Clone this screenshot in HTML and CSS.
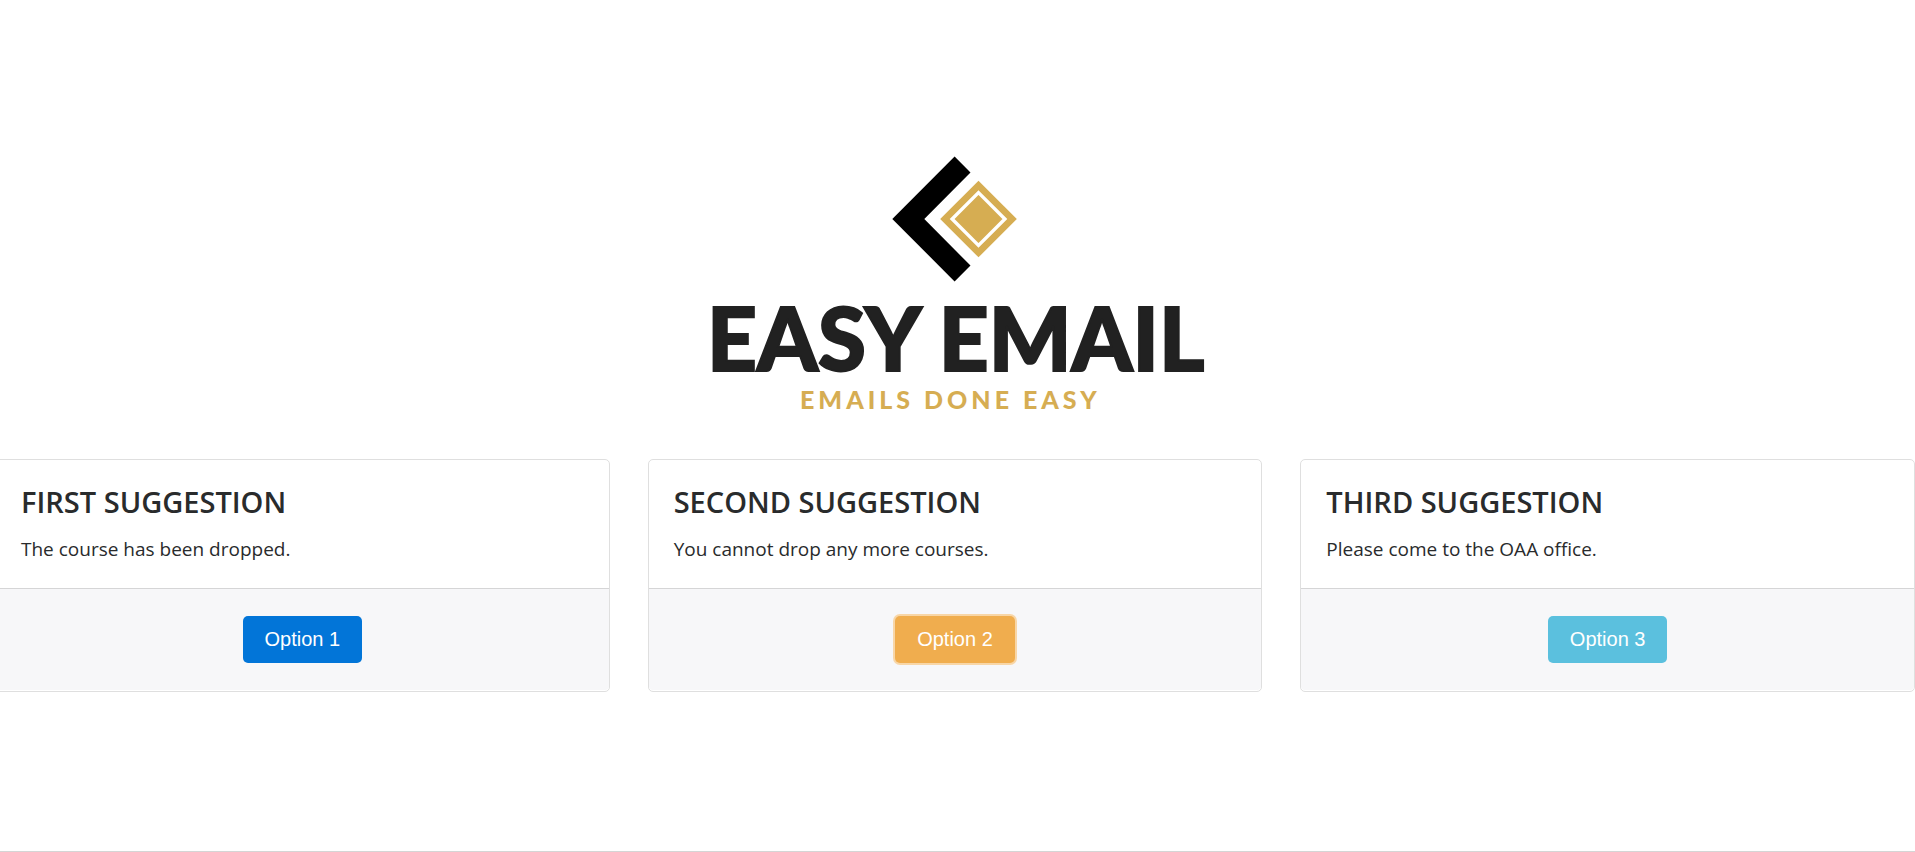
FILE: index.html
```html
<!DOCTYPE html>
<html lang="en">
<head>
  <meta charset="utf-8">
  <meta name="viewport" content="width=device-width, initial-scale=1">
  <title>Easy Email</title>
  <link rel="stylesheet" href="styles.css">
</head>
<body>
  <main class="page">
    <header class="brand">
      <svg class="logo" viewBox="0 0 535 280" role="img" aria-label="Easy Email, emails done easy">
        <path fill="#000" d="M202.3 79 264.6 16.6 280.5 32.4 234.3 79 280.5 125.6 264.6 141.4Z"/>
        <path fill="#d6ad52" d="M288.5 40.7 326.8 79 288.5 117.3 250.2 79Z"/>
        <path fill="none" stroke="#fff" stroke-width="3.4" d="M288.5 52.6 314.9 79 288.5 105.4 262.1 79Z"/>
        <text class="wordmark" x="17" y="231">EASY EMAIL</text>
        <text class="tagline" x="110" y="269">EMAILS DONE EASY</text>
      </svg>
    </header>
    <section class="deck">
      <article class="card">
        <div class="card-body">
          <h2 class="card-title">FIRST SUGGESTION</h2>
          <p class="card-text">The course has been dropped.</p>
        </div>
        <div class="card-footer"><button type="button" class="btn btn-primary">Option 1</button></div>
      </article>
      <article class="card">
        <div class="card-body">
          <h2 class="card-title">SECOND SUGGESTION</h2>
          <p class="card-text">You cannot drop any more courses.</p>
        </div>
        <div class="card-footer"><button type="button" class="btn btn-warning">Option 2</button></div>
      </article>
      <article class="card">
        <div class="card-body">
          <h2 class="card-title">THIRD SUGGESTION</h2>
          <p class="card-text">Please come to the OAA office.</p>
        </div>
        <div class="card-footer"><button type="button" class="btn btn-info">Option 3</button></div>
      </article>
    </section>
  </main>
</body>
</html>
```
FILE: styles.css
```css
* {
  box-sizing: border-box;
}

body {
  margin: 0;
  overflow-x: hidden;
  background: #fff;
  color: #292b2c;
  font-family: "Segoe UI", "Open Sans", "Noto Sans", sans-serif;
  font-size: 19px;
  line-height: 30px;
}

.page {
  display: flex;
  flex-direction: column;
  min-height: 100vh;
  padding-top: 140px;
  border-bottom: 1px solid #d5d5d5;
}

.brand {
  display: flex;
  justify-content: center;
  margin-bottom: 39px;
}

.logo {
  display: block;
  width: 535px;
  max-width: 100%;
}

.wordmark {
  fill: #212121;
  stroke: #212121;
  stroke-width: 2px;
  font-family: Lato, sans-serif;
  font-size: 87px;
  font-weight: 900;
}

.tagline {
  fill: #d6ad52;
  font-family: Lato, sans-serif;
  font-size: 25px;
  font-weight: 900;
  letter-spacing: 4px;
}

.deck {
  display: grid;
  grid-template-columns: repeat(3, 1fr);
  gap: 38px;
  margin-left: -5px;
}

.card {
  display: flex;
  flex-direction: column;
  padding-bottom: 1px;
  border: 1px solid #dfdfdf;
  border-radius: 5px;
  background: #fff;
}

.card-body {
  flex: 1;
  padding: 25px;
}

.card-title {
  margin: 0 0 16px;
  font-size: 29px;
  font-weight: 600;
  line-height: 33px;
}

.card-text {
  margin: 0 0 -1px;
}

.card-footer {
  padding: 27px 25px;
  border-top: 1px solid #d5d5d6;
  border-radius: 0 0 4px 4px;
  background: #f7f7f9;
  text-align: center;
}

.btn {
  display: block;
  margin: 0 auto;
  padding: 10px 22px;
  border: 0;
  border-radius: 5px;
  color: #fff;
  font-family: "Liberation Sans", Arial, sans-serif;
  font-size: 20px;
  line-height: 27px;
  cursor: pointer;
}

.btn-primary {
  background: #0275d8;
}

.btn-warning {
  background: #f0ad4e;
  box-shadow: 0 0 0 2px #f8d6a7;
}

.btn-info {
  background: #5bc0de;
}
```
